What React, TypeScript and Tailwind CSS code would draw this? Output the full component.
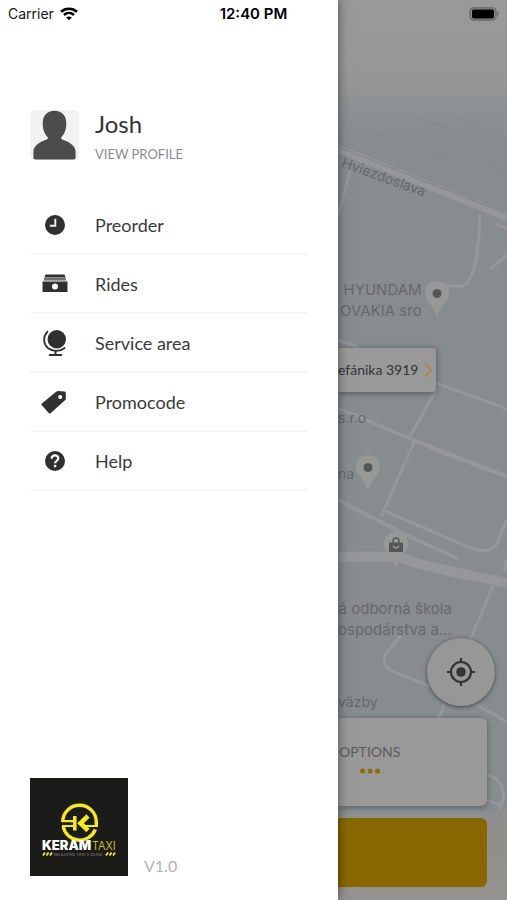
import React from "react";

const ui = "font-['Lato','Noto_Sans',sans-serif]";
const system = "font-['Inter','Liberation_Sans',sans-serif]";
const mapLabel = "absolute whitespace-nowrap text-right text-[#66696b] font-['Inter','Liberation_Sans',sans-serif] leading-[21px]";

function WifiIcon() {
  return (
    <svg viewBox="0 0 18 14" className="h-3.5 w-[18px]" fill="none" stroke="#000" strokeWidth="2.6" aria-hidden="true">
      <path d="M1 4.8C5.5 .7 12.5 .7 17 4.8" />
      <path d="M4 8C6.9 5.400 11.100 5.400 14 8" />
      <path d="M9 13.300 6.100 10.500c1.600-1.500 4.200-1.500 5.800 0Z" fill="#000" stroke="none" />
    </svg>
  );
}

function BatteryIcon() {
  return (
    <svg viewBox="0 0 30 14" className="h-3.5 w-[30px]" aria-label="Battery full">
      <rect x="1" y=".8" width="26" height="12.4" rx="3.6" fill="#8b8b8b" stroke="#666" strokeWidth="1.2" />
      <rect x="3" y="2.6" width="22" height="8.8" rx="1.6" fill="#000" />
      <path d="M28.2 4.8c1.8.5 1.8 3.9 0 4.4Z" fill="#666" />
    </svg>
  );
}

function StatusBar() {
  return (
    <header className={`${system} absolute inset-x-0 top-0 z-20 grid h-7 grid-cols-3 items-center px-2 text-sm text-[#161616]`}>
      <span className="flex items-center gap-1.5">Carrier <WifiIcon /></span>
      <span className="text-center text-[15px] font-semibold text-black">12:40 PM</span>
      <span className="justify-self-end"><BatteryIcon /></span>
    </header>
  );
}

function Avatar() {
  return (
    <svg viewBox="0 0 49 50" className="h-[50px] w-[49px]" aria-hidden="true">
      <rect width="49" height="50" rx="5" fill="#f2f2f2" />
      <path d="M24.500.8C32 .8 36.300 6 36.300 13c0 6.500-1.800 11-4.800 14-.7 1-.4 2 .8 2.600C39 32 45.600 35.500 45.600 42v5.500c0 1.300-.8 2-2 2H5.400c-1.200 0-2-.7-2-2V42c0-6.500 6.600-10 13.300-12.400 1.200-.6 1.500-1.600.8-2.600-3-3-4.800-7.500-4.800-14C12.700 6 17 .8 24.500.8Z" fill="#4b4b4b" />
    </svg>
  );
}

function ClockIcon() {
  return (
    <svg viewBox="0 0 28 28" className="size-7" aria-hidden="true">
      <circle cx="14" cy="14" r="10" fill="#303030" />
      <path d="M14.300 7.800V14.700H8.800" fill="none" stroke="#eee" strokeWidth="1.900" />
    </svg>
  );
}

function RidesIcon() {
  return (
    <svg viewBox="0 0 28 28" className="size-7" aria-hidden="true">
      <path d="M4.500 4.500h19l.9 2.500H3.600Z" fill="#303030" />
      <path d="M3.600 7h20.800l1 3.700H2.600Z" fill="#8a8a8a" />
      <path d="M3.200 8.500h21.600l.3 1H2.900Z" fill="#555" />
      <path d="M1.500 11.500h25v10.500h-25Z" fill="#303030" />
      <circle cx="14" cy="16.500" r="3" fill="#fff" />
    </svg>
  );
}

function GlobeIcon() {
  return (
    <svg viewBox="0 0 28 28" className="size-7" aria-hidden="true">
      <circle cx="15.800" cy="10.300" r="9.200" fill="#303030" />
      <path d="M6.500 2.600C1.500 8 2.500 15.500 7.200 19.200 12 22.800 19 22.800 23.600 19M14.500 22v4M8.700 26h11.600" fill="none" stroke="#303030" strokeWidth="1.900" strokeLinecap="round" />
    </svg>
  );
}

function TagIcon() {
  return (
    <svg viewBox="0 0 28 28" className="size-7" aria-hidden="true">
      <path d="M.6 15.800 14.500 4.200Q15.500 3.400 17 3L23.500 3.400Q24.800 3.700 24.800 5V11.500L9.300 25.400Q8.600 25.900 8 25.200L.6 16.900Q.2 16.300.6 15.800Z" fill="#303030" />
      <circle cx="19.200" cy="9" r="2" fill="#fff" />
    </svg>
  );
}

function HelpIcon() {
  return (
    <svg viewBox="0 0 28 28" className="size-7" aria-hidden="true">
      <circle cx="14" cy="14" r="10" fill="#303030" />
      <path d="M10.700 11.700c0-4.300 6.600-4.200 6.600-.4 0 2.400-3.200 2.500-3.200 5" fill="none" stroke="#fff" strokeWidth="2.200" />
      <circle cx="14.100" cy="19.100" r="1.400" fill="#fff" />
    </svg>
  );
}

function Logo() {
  return (
    <svg viewBox="0 0 98 98" className="size-[98px]" aria-label="Keram Taxi">
      <rect width="98" height="98" fill="#1b1b19" />
      <g fill="none" stroke="#f4ec12" strokeWidth="3.400">
        <path d="M32.700 44A16.800 16.800 0 0 1 66.300 44V49M65.300 51.500A16.800 16.800 0 0 1 33.200 48.500" />
        <path d="M32 43.200H44M32 48H44M54 48H67.900" strokeWidth="2.200" />
        <path d="M44.800 38V52.500" strokeWidth="3.600" />
        <path d="M58 38 50.500 45.200 58 52.500" strokeWidth="4.600" />
      </g>
      <text x="12" y="72" fill="#fff" fontFamily="Inter, sans-serif" fontWeight="900" fontSize="13">KERAM</text>
      <text x="62" y="72" fill="#e5dc1c" fontFamily="Inter, sans-serif" fontWeight="300" fontSize="11">TAXI</text>
      <g stroke="#f4ec12" strokeWidth="1.800">
        <path d="M13 77.500 15 74.500M16.500 77.500 18.500 74.500M20 77.500 22 74.500M76 77.500 78 74.500M79.500 77.500 81.500 74.500M83 77.500 85 74.500" />
      </g>
      <text x="24" y="78" fill="#8a8a82" fontFamily="Inter, sans-serif" fontSize="4">NAJLEPŠIE TAXI V ŽILINE</text>
    </svg>
  );
}

const menu = [
  { label: "Preorder", Icon: ClockIcon },
  { label: "Rides", Icon: RidesIcon },
  { label: "Service area", Icon: GlobeIcon },
  { label: "Promocode", Icon: TagIcon },
  { label: "Help", Icon: HelpIcon },
];

function Drawer() {
  return (
    <aside className={`${ui} relative z-10 flex w-2/3 flex-col bg-white px-[30px] pb-6 pt-[110px] shadow-[0_0_10px_rgba(0,0,0,0.5)]`}>
      <a href="#profile" className="flex items-start gap-4">
        <Avatar />
        <span className="flex flex-col">
          <span className="text-2xl leading-7 text-[#333]">Josh</span>
          <span className="mt-1.5 text-[13px] leading-5 text-[#8c8c8c]">VIEW PROFILE</span>
        </span>
      </a>
      <nav className="mt-8">
        <ul>
          {menu.map(({ label, Icon }) => (
            <li key={label} className="border-b-2 border-[#f6f6f6]">
              <a href="#menu" className="flex h-[57px] items-center gap-[26px] pl-[11px] text-lg text-[#3a3a3a]">
                <Icon />
                {label}
              </a>
            </li>
          ))}
        </ul>
      </nav>
      <footer className="mt-auto flex items-end gap-4">
        <Logo />
        <span className="text-base leading-5 text-[#b5b5b5]">V1.0</span>
      </footer>
    </aside>
  );
}

function MapCanvas() {
  return (
    <svg viewBox="0 0 169 900" preserveAspectRatio="xMinYMin slice" className="absolute inset-0 size-full" aria-hidden="true">
      <defs>
        <linearGradient id="haze" x1="0" y1="0" x2="0" y2="1">
          <stop offset="0" stopColor="#999" />
          <stop offset=".5" stopColor="#979797" />
          <stop offset=".75" stopColor="#8c9093" />
          <stop offset="1" stopColor="#878c8f" />
        </linearGradient>
        <linearGradient id="fade" x1="0" y1="0" x2="0" y2="1">
          <stop offset="0" stopColor="#8b8f91" />
          <stop offset=".3" stopColor="#8f8e89" />
          <stop offset="1" stopColor="#949390" />
        </linearGradient>
      </defs>
      <rect width="169" height="900" fill="#878c8f" />
      <rect width="169" height="150" fill="url(#haze)" />
      <g fill="none" stroke="#95989b" strokeWidth="3">
        <path d="M30 132 50 137M80 118 110 128M115 116 140 126M95 155 110 160M150 165 169 172" stroke="#83888b" strokeWidth="1" />
        <path d="M0 149 169 217" strokeWidth="8" />
        <path d="M0 147 169 214" stroke="#7f8385" strokeWidth="1" />
        <path d="M12 170 0 217M142 214C141 245 138 286 122 286H105M169 255 152 269M158 224 169 228" />
        <path d="M0 340 20 347M0 408 110 455 169 477M98 383 169 409M98 390 70 440M77 440 43 517M76 440 169 476" />
        <path d="M0 500 70 536 121 559" strokeWidth="4" />
        <path d="M47 511 130 547Q150 555 158 545L169 520M166 571 169 558" />
        <path d="M0 557Q60 555 70 560T169 583" strokeWidth="10" />
        <path d="M155 586 132 640M65 633 47 655Q43 665 56 672L92 686M106 705 100 720M130 700 169 722M149 775Q165 778 166 798L158 815M149 800 165 806" />
      </g>
      <rect y="810" width="169" height="90" fill="url(#fade)" />
    </svg>
  );
}

function Pin({ className }: { className: string }) {
  return (
    <svg viewBox="0 0 24 36" className={`absolute h-9 w-6 ${className}`} aria-hidden="true">
      <path d="M12 0a12 12 0 0 1 12 12c0 9-9 12-12 24C9 24 0 21 0 12A12 12 0 0 1 12 0Z" fill="#979999" />
      <circle cx="12" cy="12.500" r="4.500" fill="#545758" />
    </svg>
  );
}

function ShopPin() {
  return (
    <svg viewBox="0 0 24 36" className="absolute left-[46px] top-[532px] h-9 w-6" aria-hidden="true">
      <path d="M12 0a12 12 0 0 1 12 12c0 9-9 12-12 24C9 24 0 21 0 12A12 12 0 0 1 12 0Z" fill="#979999" />
      <path d="M5 10.500h14V20H5Z" fill="#545758" />
      <path d="M9 11V9a3 3 0 0 1 6 0v2" fill="none" stroke="#545758" strokeWidth="1.500" />
      <path d="M9 14q3 4 6 0" fill="none" stroke="#979999" strokeWidth="1.500" />
    </svg>
  );
}

function MapScreen() {
  return (
    <main className="relative flex flex-1 flex-col justify-end overflow-hidden">
      <MapCanvas />
      <span className={`${mapLabel} left-0.5 top-[166px] origin-center rotate-[20deg] text-sm`}>Hviezdoslava</span>
      <span className={`${mapLabel} left-0.5 top-[279px] text-[15px]`}>HYUNDAM<br />OVAKIA sro</span>
      <Pin className="left-[87px] top-[281px]" />
      <button type="button" className={`${ui} absolute left-0 top-[348px] flex h-11 items-center gap-1.5 whitespace-nowrap rounded-r bg-[#999] pr-1 text-sm text-[#333] shadow-[0_1px_6px_rgba(0,0,0,0.4)]`}>
        efánika 3919
        <svg viewBox="0 0 8 14" className="h-3.5 w-2" fill="none" stroke="#b08a1a" strokeWidth="1.500" aria-hidden="true"><path d="m1 0 6 7-6 7" /></svg>
      </button>
      <span className={`${mapLabel} left-0 top-[407px] text-sm`}>s.r.o</span>
      <span className={`${mapLabel} left-0 top-[463px] text-sm`}>na</span>
      <Pin className="left-[18px] top-[455px]" />
      <ShopPin />
      <span className={`${mapLabel} left-0 top-[598px] text-[15px]`}>á odborná škola<br />ospodárstva a...</span>
      <span className={`${mapLabel} left-0 top-[691px] text-sm`}>väzby</span>
      <div className={`${ui} relative flex flex-col gap-3 pb-[13px] pr-5`}>
        <button type="button" aria-label="My location" className="-mr-2 flex size-[68px] items-center justify-center self-end rounded-full bg-[#979797] shadow-[0_1px_4px_rgba(0,0,0,0.5)]">
          <svg viewBox="0 0 28 28" className="size-7" aria-hidden="true" fill="none" stroke="#333" strokeWidth="2.200">
            <circle cx="14" cy="14" r="10" />
            <circle cx="14" cy="14" r="4.800" fill="#333" stroke="none" />
            <path d="M14 0v5M14 23v5M0 14h5M23 14h5" />
          </svg>
        </button>
        <button type="button" className="flex h-[88px] items-start rounded-r-md bg-[#999] pl-px pt-6 shadow-[0_1px_6px_rgba(0,0,0,0.35)]">
          <span className="flex flex-col items-center text-sm leading-5 text-[#5c5c5c]">
            OPTIONS
            <svg viewBox="0 0 20 6" className="mt-1.5 h-1.5 w-5" fill="#8f6c00" aria-hidden="true"><circle cx="2.500" cy="3" r="2.500" /><circle cx="10" cy="3" r="2.500" /><circle cx="17.500" cy="3" r="2.500" /></svg>
          </span>
        </button>
        <button type="button" aria-label="Order" className="h-[69px] rounded-r-md bg-[#886700]" />
      </div>
    </main>
  );
}

export default function App() {
  return (
    <div className="relative flex min-h-screen overflow-hidden">
      <StatusBar />
      <Drawer />
      <MapScreen />
    </div>
  );
}
